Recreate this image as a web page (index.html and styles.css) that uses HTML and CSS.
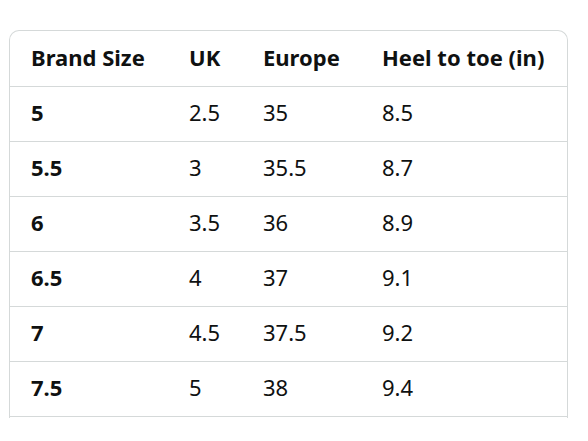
FILE: index.html
```html
<!DOCTYPE html>
<html>
<head>
<meta charset="utf-8">
<link rel="stylesheet" href="styles.css">
</head>
<body>
<div class="frame">
  <table class="sizes">
    <colgroup>
      <col class="c1"><col class="c2"><col class="c3"><col class="c4">
    </colgroup>
    <thead>
      <tr><th>Brand Size</th><th>UK</th><th>Europe</th><th>Heel to toe (in)</th></tr>
    </thead>
    <tbody>
      <tr><th>5</th><td>2.5</td><td>35</td><td>8.5</td></tr>
      <tr><th>5.5</th><td>3</td><td>35.5</td><td>8.7</td></tr>
      <tr><th>6</th><td>3.5</td><td>36</td><td>8.9</td></tr>
      <tr><th>6.5</th><td>4</td><td>37</td><td>9.1</td></tr>
      <tr><th>7</th><td>4.5</td><td>37.5</td><td>9.2</td></tr>
      <tr><th>7.5</th><td>5</td><td>38</td><td>9.4</td></tr>
    </tbody>
  </table>
</div>
</body>
</html>
```
FILE: styles.css
```css
html, body {
  margin: 0;
  padding: 0;
  background: #ffffff;
}
body {
  font-family: "Noto Sans", "Liberation Sans", sans-serif;
  color: #0f1111;
}
.frame {
  box-sizing: border-box;
  margin: 30px 0 0 9px;
  width: 559px;
  height: 388px;
  border: 1px solid #d5d9d9;
  border-bottom: none;
  border-radius: 10px 10px 0 0;
  overflow: hidden;
}
.sizes {
  border-collapse: collapse;
  table-layout: fixed;
  width: 557px;
}
.c1 { width: 158px; }
.c2 { width: 74px; }
.c3 { width: 119px; }
.c4 { width: 206px; }
.sizes th, .sizes td {
  box-sizing: border-box;
  height: 55px;
  padding: 0 0 3px 21px;
  border-bottom: 1px solid #d5d9d9;
  text-align: left;
  vertical-align: middle;
  font-size: 22px;
  white-space: nowrap;
}
.sizes th { font-weight: 700; }
.sizes td { font-weight: 400; }
```
